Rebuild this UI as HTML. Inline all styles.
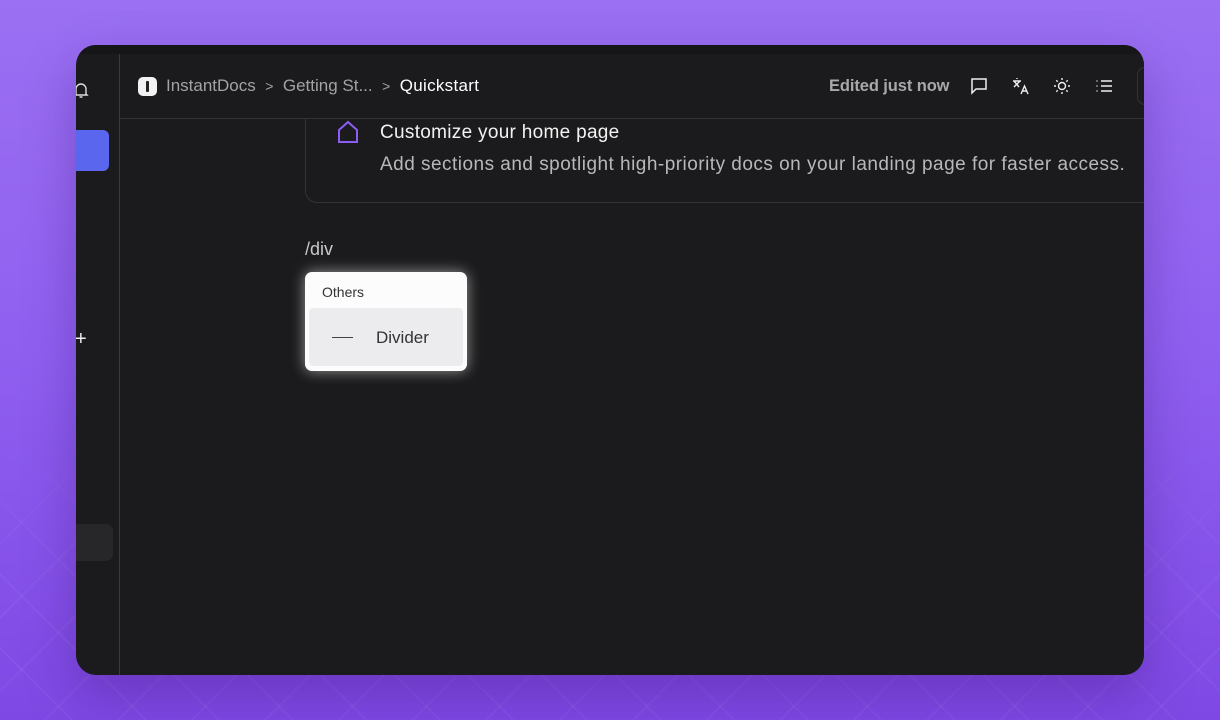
<!DOCTYPE html>
<html><head><style>
*{margin:0;padding:0;box-sizing:border-box}
body{width:1220px;height:720px;overflow:hidden;font-family:"Liberation Sans",sans-serif;
background:linear-gradient(180deg,#9b70f2 0%,#8f5ff0 50%,#7e48e4 100%);position:relative}
.pat{position:absolute;left:0;right:0;top:380px;bottom:0;
background-image:repeating-linear-gradient(45deg,transparent 0 50px,rgba(255,255,255,.045) 50px 52px),repeating-linear-gradient(-45deg,transparent 0 50px,rgba(255,255,255,.045) 50px 52px);
-webkit-mask-image:linear-gradient(180deg,transparent,#000 70%);mask-image:linear-gradient(180deg,transparent,#000 70%)}
.win{position:absolute;left:76px;top:45px;width:1068px;height:630px;background:#1b1b1d;border-radius:20px;overflow:hidden;box-shadow:0 20px 50px rgba(60,20,120,.35)}
.topstrip{position:absolute;left:0;right:0;top:0;height:9px;background:#161618;z-index:3}
.head{position:absolute;left:44px;right:0;top:9px;height:64px;background:#1b1b1d;z-index:2}
.side{position:absolute;left:43px;top:9px;bottom:0;width:1px;background:#3a3a3d;z-index:3}
.hline{position:absolute;left:44px;right:0;top:73px;height:1px;background:#333336;z-index:3}
.t{position:absolute;white-space:nowrap}
.z{z-index:4}
</style></head><body>
<div class="pat"></div>
<div class="win">
<div class="topstrip"></div>
<div class="head"></div>
<div class="side"></div>
<div class="hline"></div>
<svg class="t" style="left:-3px;top:36px" width="16" height="18" viewBox="0 0 16 18" fill="none" stroke="#ddd" stroke-width="1.4"><path d="M3 13V8a5 5 0 0 1 10 0v5l1 1H2z"/><path d="M6.5 16h3"/></svg>
<div class="t" style="left:-10px;top:85px;width:43px;height:41px;background:#5b66ee;border-radius:6px"></div>
<div class="t" style="left:-1px;top:284px;color:#eee;font-size:20px;line-height:20px">+</div>
<div class="t" style="left:-10px;top:479px;width:47px;height:37px;background:#27272a;border-radius:7px"></div>

<div class="t" style="left:229px;top:20px;width:860px;height:138px;border:1px solid #333336;border-radius:12px"></div>

<div class="t z" style="left:62px;top:32px;width:19px;height:19px;background:#f2f2f2;border-radius:5px"><div style="position:absolute;left:8px;top:4px;width:3px;height:11px;background:#222;border-radius:1px"></div></div>
<div class="t z" style="left:90px;top:31px;font-size:17px;color:#a3a3a6;line-height:20px">InstantDocs&nbsp;&nbsp;<span style="font-size:14px">&gt;</span>&nbsp;&nbsp;Getting St...&nbsp;&nbsp;<span style="font-size:14px">&gt;</span>&nbsp;&nbsp;<span style="color:#fff;letter-spacing:.3px">Quickstart</span></div>
<div class="t z" style="left:753px;top:31px;font-size:16.5px;color:#a8a8ab;line-height:20px;font-weight:bold;letter-spacing:-0.1px">Edited just now</div>
<svg class="t z" style="left:894px;top:32px" width="18" height="18" viewBox="0 0 18 18" fill="none" stroke="#eee" stroke-width="1.5"><path d="M2 2h14v10H6l-4 4z"/></svg>
<svg class="t z" style="left:935px;top:31px" width="20" height="20" viewBox="0 0 20 20" fill="none" stroke="#eee" stroke-width="1.4"><path d="M2 5h8M6 2v1M3 5l5 6M9 5l-6 6M10 18l3.5-8 3.5 8M11.3 15h4.5"/></svg>
<svg class="t z" style="left:977px;top:32px" width="18" height="18" viewBox="0 0 18 18" fill="none" stroke="#eee" stroke-width="1.4"><circle cx="9" cy="9" r="3.5"/><path d="M9 1v2M9 15v2M1 9h2M15 9h2M3.3 3.3l1.4 1.4M13.3 13.3l1.4 1.4M3.3 14.7l1.4-1.4M13.3 4.7l1.4-1.4"/></svg>
<svg class="t z" style="left:1019px;top:33px" width="18" height="16" viewBox="0 0 18 16" fill="none" stroke="#eee" stroke-width="1.5"><path d="M6 3h11M6 8h11M6 13h11M1.5 3h1M1.5 8h1M1.5 13h1"/></svg>
<div class="t z" style="left:1061px;top:22px;width:20px;height:38px;border:1px solid #333;border-radius:8px"></div>

<svg class="t" style="left:260px;top:75px" width="24" height="24" viewBox="0 0 24 24" fill="none" stroke="#8b5cf6" stroke-width="2"><path d="M3 22V10l9-8 9 8v12z"/></svg>
<div class="t" style="left:304px;top:77px;font-size:19px;color:#f2f2f2;letter-spacing:.3px">Customize your home page</div>
<div class="t" style="left:304px;top:109px;font-size:19px;color:#b8b8bb;letter-spacing:.48px">Add sections and spotlight high-priority docs on your landing page for faster access.</div>

<div class="t" style="left:229px;top:194px;font-size:18px;color:#c8c8cb">/div</div>
<div class="t" style="left:229px;top:227px;width:162px;height:99px;background:#fcfcfd;border-radius:7px;box-shadow:0 0 14px rgba(255,255,255,.55)">
 <div class="t" style="left:17px;top:12px;font-size:14px;color:#333">Others</div>
 <div class="t" style="left:4px;top:36px;width:154px;height:58px;background:#ececee;border-radius:4px">
  <div class="t" style="left:23px;top:29px;width:21px;height:1px;background:#444"></div>
  <div class="t" style="left:67px;top:20px;font-size:17px;color:#333">Divider</div>
 </div>
</div>
</div>
</body></html>
